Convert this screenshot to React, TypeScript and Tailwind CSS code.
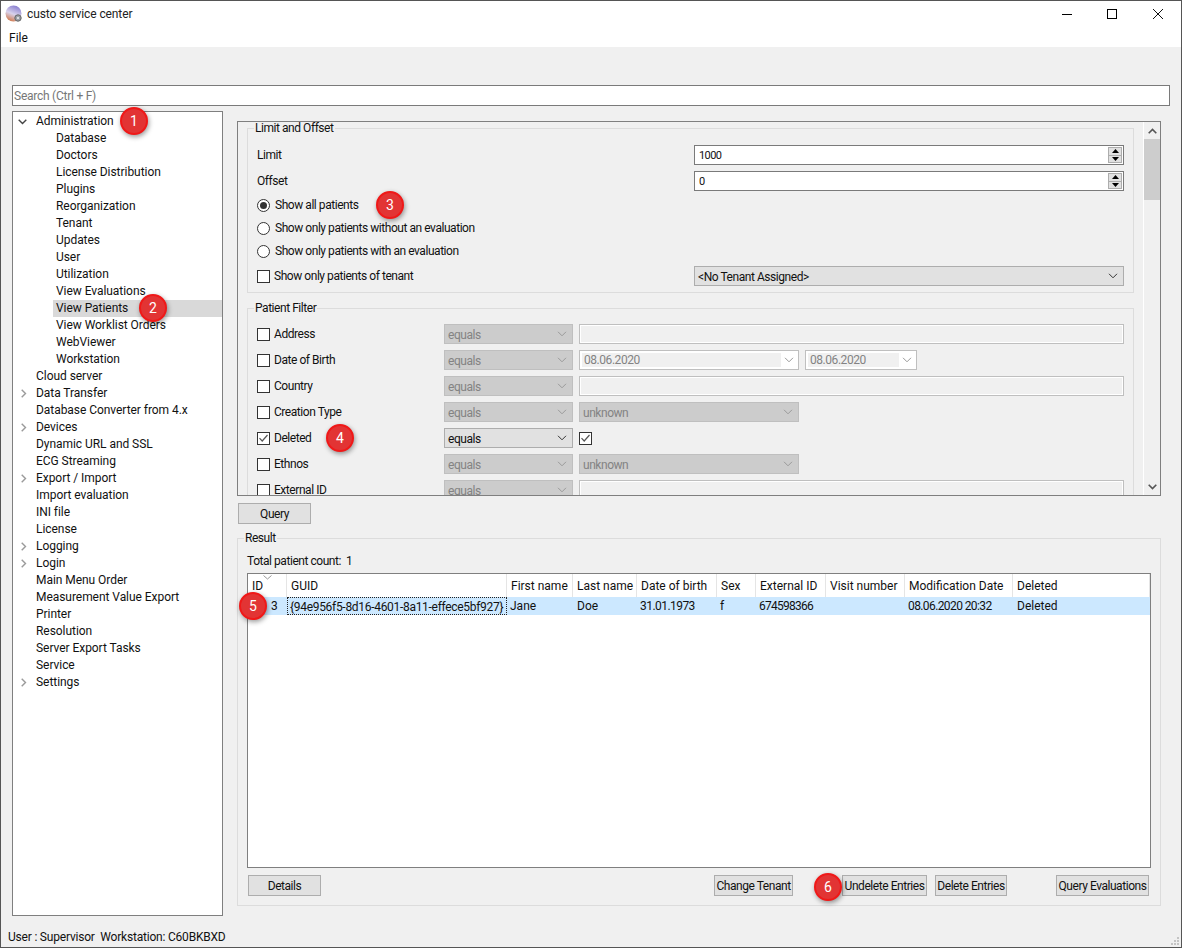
import type { ReactNode } from 'react';

const treeItems: { label: string; level: 0 | 1; arrow?: 'open' | 'closed'; selected?: boolean }[] = [
  { label: 'Administration', level: 0, arrow: 'open' },
  { label: 'Database', level: 1 },
  { label: 'Doctors', level: 1 },
  { label: 'License Distribution', level: 1 },
  { label: 'Plugins', level: 1 },
  { label: 'Reorganization', level: 1 },
  { label: 'Tenant', level: 1 },
  { label: 'Updates', level: 1 },
  { label: 'User', level: 1 },
  { label: 'Utilization', level: 1 },
  { label: 'View Evaluations', level: 1 },
  { label: 'View Patients', level: 1, selected: true },
  { label: 'View Worklist Orders', level: 1 },
  { label: 'WebViewer', level: 1 },
  { label: 'Workstation', level: 1 },
  { label: 'Cloud server', level: 0 },
  { label: 'Data Transfer', level: 0, arrow: 'closed' },
  { label: 'Database Converter from 4.x', level: 0 },
  { label: 'Devices', level: 0, arrow: 'closed' },
  { label: 'Dynamic URL and SSL', level: 0 },
  { label: 'ECG Streaming', level: 0 },
  { label: 'Export / Import', level: 0, arrow: 'closed' },
  { label: 'Import evaluation', level: 0 },
  { label: 'INI file', level: 0 },
  { label: 'License', level: 0 },
  { label: 'Logging', level: 0, arrow: 'closed' },
  { label: 'Login', level: 0, arrow: 'closed' },
  { label: 'Main Menu Order', level: 0 },
  { label: 'Measurement Value Export', level: 0 },
  { label: 'Printer', level: 0 },
  { label: 'Resolution', level: 0 },
  { label: 'Server Export Tasks', level: 0 },
  { label: 'Service', level: 0 },
  { label: 'Settings', level: 0, arrow: 'closed' },
];

const columns = [
  { title: 'ID', value: '3', width: 'w-[39px]', cell: 'pl-[23px]' },
  { title: 'GUID', value: '{94e956f5-8d16-4601-8a11-effece5bf927}', width: 'w-[220px]', cell: 'pl-[2px] tracking-[-0.3px] border border-dotted border-[#222]' },
  { title: 'First name', value: 'Jane', width: 'w-[66px]', cell: 'pl-[3px]' },
  { title: 'Last name', value: 'Doe', width: 'w-[64px]', cell: 'pl-[4px]' },
  { title: 'Date of birth', value: '31.01.1973', width: 'w-[80px]', cell: 'pl-[3px] tracking-[-0.55px]' },
  { title: 'Sex', value: 'f', width: 'w-[39px]', cell: 'pl-[3px]' },
  { title: 'External ID', value: '674598366', width: 'w-[70px]', cell: 'pl-[3px] tracking-[-0.75px]' },
  { title: 'Visit number', value: '', width: 'w-[79px]', cell: 'pl-[3px]' },
  { title: 'Modification Date', value: '08.06.2020 20:32', width: 'w-[108px]', cell: 'pl-[3px] tracking-[-0.6px]' },
  { title: 'Deleted', value: 'Deleted', width: 'flex-1', cell: 'pl-[4px]' },
];

function Chevron({ className = 'stroke-[#444]' }: { className?: string }) {
  return (
    <svg width="10" height="6" viewBox="0 0 10 6" fill="none" className={className}>
      <path d="M1 .8 5 4.8 9 .8" strokeWidth="1" />
    </svg>
  );
}

function Checkbox({ checked }: { checked?: boolean }) {
  return (
    <span className="flex h-[13px] w-[13px] shrink-0 items-center justify-center border border-[#333] bg-white">
      {checked && (
        <svg width="11" height="11" viewBox="0 0 11 11" fill="none">
          <path d="M1.5 5.2 4.2 8 9.5 2" stroke="#555" strokeWidth="1.2" />
        </svg>
      )}
    </span>
  );
}

function Radio({ checked }: { checked?: boolean }) {
  return (
    <span className="flex h-[13px] w-[13px] shrink-0 items-center justify-center rounded-full border border-[#333] bg-white">
      {checked && <span className="h-[7px] w-[7px] rounded-full bg-[#333]" />}
    </span>
  );
}

function Spin({ value }: { value: string }) {
  return (
    <div className="ml-auto flex h-5 w-[430px] items-center border border-[#7a7a7a] bg-white pl-[4px] pr-[1px]">
      <span className="flex-1 pt-px text-[11px] tracking-[-0.6px]">{value}</span>
      <div className="flex h-4 w-[14px] flex-col border border-[#adadad] bg-[#e1e1e1]">
        <span className="flex flex-1 items-center justify-center border-b border-[#adadad]">
          <svg width="7" height="4" viewBox="0 0 7 4"><path d="M3.5 0 7 4H0z" fill="#000" /></svg>
        </span>
        <span className="flex flex-1 items-center justify-center">
          <svg width="7" height="4" viewBox="0 0 7 4"><path d="M0 0h7L3.5 4z" fill="#000" /></svg>
        </span>
      </div>
    </div>
  );
}

function Combo({ value, width, disabled }: { value: string; width: string; disabled?: boolean }) {
  return (
    <div
      className={`flex h-5 shrink-0 items-center justify-between border pl-[3px] pr-[5px] ${width} ${
        disabled ? 'border-[#bfbfbf] bg-[#cccccc] text-[#838383]' : 'border-[#adadad] bg-[#e1e1e1]'
      }`}
    >
      <span className="pt-px">{value}</span>
      <Chevron className={disabled ? 'stroke-[#9a9a9a]' : 'stroke-[#333]'} />
    </div>
  );
}

function DisabledField() {
  return <div className="h-5 flex-1 border border-[#bfbfbf] bg-[#f0f0f0] shadow-[inset_0_0_0_1px_#fff]" />;
}

function DateField({ width, fill }: { width: string; fill: string }) {
  return (
    <div className={`flex h-5 shrink-0 items-center border border-[#bfbfbf] bg-white p-[2px] text-[#838383] ${width}`}>
      <span className={`h-full bg-[#f0f0f0] pl-[2px] leading-[15px] ${fill}`}>08.06.2020</span>
      <span className="flex flex-1 justify-center">
        <Chevron className="stroke-[#9a9a9a]" />
      </span>
    </div>
  );
}

function FilterRow({ label, checked, children }: { label: string; checked?: boolean; children: ReactNode }) {
  return (
    <div className="mb-[6px] flex h-5 items-center">
      <Checkbox checked={checked} />
      <span className="ml-[4px] w-[170px] shrink-0">{label}</span>
      <div className="flex flex-1 items-center gap-[6px]">{children}</div>
    </div>
  );
}

function Legend({ children }: { children: ReactNode }) {
  return <legend className="-ml-[3px] px-px leading-[12px]">{children}</legend>;
}

function PushButton({ label, width, className = '' }: { label: string; width: string; className?: string }) {
  return (
    <button className={`h-[21px] shrink-0 whitespace-nowrap border border-[#adadad] bg-[#e1e1e1] text-center ${width} ${className}`}>
      {label}
    </button>
  );
}

function Badge({ n, position }: { n: number; position: string }) {
  return (
    <span
      className={`absolute flex h-[28px] w-[28px] items-center justify-center rounded-full border-2 border-[#f01818] bg-[#e23434] text-[14px] text-white shadow-[1px_2px_5px_rgba(0,0,0,0.4)] ${position}`}
    >
      {n}
    </span>
  );
}

export default function App() {
  return (
    <div className="relative flex h-[948px] w-[1182px] flex-col overflow-hidden border border-[#555] bg-[#f0f0f0] font-['Roboto',sans-serif] text-[12px] leading-4 text-[#111]">
      {/* title + menu */}
      <div className="h-[46px] shrink-0 bg-white">
        <div className="flex h-[26px] items-center pl-[4px]">
          <svg width="18" height="18" viewBox="0 0 18 18">
            <defs>
              <linearGradient id="orb" x1="0.6" y1="0" x2="0.2" y2="1">
                <stop offset="0" stopColor="#8a7fd0" />
                <stop offset="0.5" stopColor="#d8d2ec" />
                <stop offset="1" stopColor="#d0703c" />
              </linearGradient>
            </defs>
            <circle cx="8.5" cy="8.5" r="8" fill="url(#orb)" />
            <circle cx="13" cy="13" r="3.2" fill="#9aa0a8" stroke="#666" strokeWidth="1" />
            <circle cx="13" cy="13" r="1" fill="#eee" />
          </svg>
          <span className="ml-[4px] tracking-[-0.1px] text-[#222]">custo service center</span>
          <div className="ml-auto flex items-center">
            <span className="h-px w-[10px] bg-black" />
            <span className="ml-[35px] h-[10px] w-[10px] border border-black" />
            <svg width="10" height="10" viewBox="0 0 10 10" className="ml-[36px] mr-[18px]">
              <path d="M0 0 10 10M10 0 0 10" stroke="#111" strokeWidth="1" />
            </svg>
          </div>
        </div>
        <div className="pl-[8px] pt-[3px]">File</div>
      </div>

      {/* search */}
      <div className="mx-[11px] mt-[38px] flex h-[21px] shrink-0 items-center border border-[#7a7a7a] bg-white pl-px tracking-[-0.25px] text-[#777]">
        Search (Ctrl + F)
      </div>

      <div className="mt-[5px] flex">
        {/* tree */}
        <div className="ml-[11px] h-[805px] w-[211px] shrink-0 border border-[#7f7f7f] bg-white pt-px tracking-[-0.05px]">
          {treeItems.map((item) => (
            <div key={item.label} className={`flex h-[17px] items-center ${item.level === 1 ? 'pl-[40px]' : ''}`}>
              {item.level === 0 && (
                <span className="flex w-[23px] shrink-0 justify-end pr-[9px]">
                  {item.arrow === 'open' && (
                    <svg width="9" height="6" viewBox="0 0 9 6" fill="none">
                      <path d="M.7.7 4.5 4.5 8.3.7" stroke="#444" strokeWidth="1.4" />
                    </svg>
                  )}
                  {item.arrow === 'closed' && (
                    <svg width="6" height="9" viewBox="0 0 6 9" fill="none">
                      <path d="M.7.7 4.5 4.5.7 8.3" stroke="#9a9a9a" strokeWidth="1.4" />
                    </svg>
                  )}
                </span>
              )}
              <span className={`h-[17px] flex-1 ${item.level === 0 ? '' : 'pl-[3px]'} ${item.selected ? 'bg-[#d9d9d9]' : ''}`}>
                {item.label}
              </span>
            </div>
          ))}
        </div>

        {/* right column */}
        <div className="ml-[14px] w-[924px] shrink-0 pt-[10px] tracking-[-0.45px]">
          <div className="flex h-[375px] overflow-hidden border border-[#7f7f7f]">
            <div className="w-[905px] shrink-0 pl-[9px] pr-[9px]">
              <fieldset className="border border-[#dcdcdc] px-[9px] pb-[6px] pt-[11px]">
                <Legend>Limit and Offset</Legend>
                <div className="flex h-5 items-center">
                  <span>Limit</span>
                  <Spin value="1000" />
                </div>
                <div className="mt-[6px] flex h-5 items-center">
                  <span>Offset</span>
                  <Spin value="0" />
                </div>
                <div className="mt-[4px] flex h-5 items-center gap-[5px]">
                  <Radio checked />
                  Show all patients
                </div>
                <div className="mt-[3px] flex h-5 items-center gap-[5px]">
                  <Radio />
                  Show only patients without an evaluation
                </div>
                <div className="mt-[3px] flex h-5 items-center gap-[5px]">
                  <Radio />
                  Show only patients with an evaluation
                </div>
                <div className="mt-[5px] flex h-5 items-center gap-[4px]">
                  <Checkbox />
                  Show only patients of tenant
                  <Combo value="<No Tenant Assigned>" width="w-[430px] ml-auto" />
                </div>
              </fieldset>

              <fieldset className="mt-[9px] border border-[#dcdcdc] px-[9px] pt-[10px]">
                <Legend>Patient Filter</Legend>
                <FilterRow label="Address">
                  <Combo value="equals" width="w-[129px]" disabled />
                  <DisabledField />
                </FilterRow>
                <FilterRow label="Date of Birth">
                  <Combo value="equals" width="w-[129px]" disabled />
                  <DateField width="w-[220px]" fill="w-[199px]" />
                  <DateField width="w-[112px]" fill="w-[91px]" />
                </FilterRow>
                <FilterRow label="Country">
                  <Combo value="equals" width="w-[129px]" disabled />
                  <DisabledField />
                </FilterRow>
                <FilterRow label="Creation Type">
                  <Combo value="equals" width="w-[129px]" disabled />
                  <Combo value="unknown" width="w-[220px]" disabled />
                </FilterRow>
                <FilterRow label="Deleted" checked>
                  <Combo value="equals" width="w-[129px]" />
                  <Checkbox checked />
                </FilterRow>
                <FilterRow label="Ethnos">
                  <Combo value="equals" width="w-[129px]" disabled />
                  <Combo value="unknown" width="w-[220px]" disabled />
                </FilterRow>
                <FilterRow label="External ID">
                  <Combo value="equals" width="w-[129px]" disabled />
                  <DisabledField />
                </FilterRow>
              </fieldset>
            </div>

            {/* scrollbar */}
            <div className="flex w-[18px] shrink-0 flex-col items-center border-l border-white bg-[#f0f0f0]">
              <svg width="9" height="6" viewBox="0 0 9 6" fill="none" className="mt-[6px] shrink-0">
                <path d="M.7 5.3 4.5 1.5 8.3 5.3" stroke="#555" strokeWidth="1.6" />
              </svg>
              <div className="mt-[5px] h-[61px] w-full bg-[#cdcdcd]" />
              <svg width="9" height="6" viewBox="0 0 9 6" fill="none" className="mb-[5px] mt-auto shrink-0">
                <path d="M.7.7 4.5 4.5 8.3.7" stroke="#555" strokeWidth="1.6" />
              </svg>
            </div>
          </div>

          <PushButton label="Query" width="w-[73px]" className="ml-px mt-[7px] block" />

          <fieldset className="mt-[8px] h-[374px] border border-[#dcdcdc] px-[9px] pb-[9px] pt-[9px]">
            <Legend>Result</Legend>
            <div className="h-4">Total patient count:&nbsp; 1</div>
            <div className="mt-[4px] h-[295px] border border-[#7f7f7f] bg-white tracking-normal">
              <div className="relative flex h-[23px] items-center">
                {columns.map((c) => (
                  <div key={c.title} className={`h-full whitespace-nowrap border-r border-[#e5e5e5] pl-[4px] leading-[24px] last:border-r-0 ${c.width}`}>
                    {c.title}
                  </div>
                ))}
                <svg width="9" height="5" viewBox="0 0 9 5" fill="none" className="absolute left-[15px] top-[1px]">
                  <path d="M.5.5 4.5 4 8.5.5" stroke="#999" />
                </svg>
              </div>
              <div className="flex h-[18px] items-center bg-[#cce8ff]">
                {columns.map((c) => (
                  <div key={c.title} className={`h-full whitespace-nowrap leading-[18px] ${c.width} ${c.cell}`}>
                    {c.value}
                  </div>
                ))}
              </div>
            </div>
            <div className="mt-[7px] flex">
              <PushButton label="Details" width="w-[73px]" className="ml-px" />
              <PushButton label="Change Tenant" width="w-[79px]" className="ml-auto" />
              <PushButton label="Undelete Entries" width="w-[85px]" className="ml-[49px]" />
              <PushButton label="Delete Entries" width="w-[72px]" className="ml-[8px]" />
              <PushButton label="Query Evaluations" width="w-[93px]" className="ml-[49px] mr-[2px]" />
            </div>
          </fieldset>
        </div>
      </div>

      {/* status */}
      <div className="mt-[13px] pl-[7px] tracking-[-0.2px]">User : Supervisor&nbsp; Workstation: C60BKBXD</div>

      <svg width="10" height="10" viewBox="0 0 10 10" className="absolute bottom-[1px] right-[1px]">
        <path d="M7 1h2v2H7zM4 4h2v2H4zM7 4h2v2H7zM1 7h2v2H1zM4 7h2v2H4zM7 7h2v2H7z" fill="#c4c4c4" />
      </svg>

      <Badge n={1} position="left-[119px] top-[106px]" />
      <Badge n={2} position="left-[138px] top-[293px]" />
      <Badge n={3} position="left-[375px] top-[190px]" />
      <Badge n={4} position="left-[325px] top-[423px]" />
      <Badge n={5} position="left-[238px] top-[591px]" />
      <Badge n={6} position="left-[813px] top-[872px]" />
    </div>
  );
}
